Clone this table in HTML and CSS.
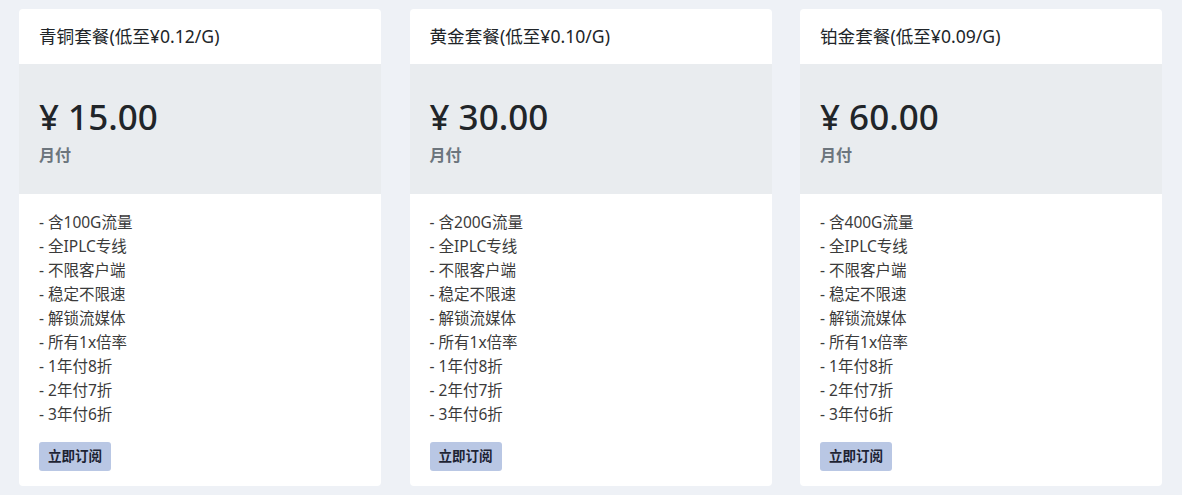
FILE: index.html
```html
<!DOCTYPE html>
<html lang="zh-CN">
<head>
<meta charset="utf-8">
<title>套餐</title>
<link rel="stylesheet" href="styles.css">
</head>
<body>
<div class="plans">
  <div class="card">
    <div class="card-header">青铜套餐(低至¥0.12/G)</div>
    <div class="card-price">
      <div class="price">¥ 15.00</div>
      <div class="period">月付</div>
    </div>
    <div class="card-body">
      <ul class="features">
        <li>- 含100G流量</li>
        <li>- 全IPLC专线</li>
        <li>- 不限客户端</li>
        <li>- 稳定不限速</li>
        <li>- 解锁流媒体</li>
        <li>- 所有1x倍率</li>
        <li>- 1年付8折</li>
        <li>- 2年付7折</li>
        <li>- 3年付6折</li>
      </ul>
      <button class="btn">立即订阅</button>
    </div>
  </div>
  <div class="card">
    <div class="card-header">黄金套餐(低至¥0.10/G)</div>
    <div class="card-price">
      <div class="price">¥ 30.00</div>
      <div class="period">月付</div>
    </div>
    <div class="card-body">
      <ul class="features">
        <li>- 含200G流量</li>
        <li>- 全IPLC专线</li>
        <li>- 不限客户端</li>
        <li>- 稳定不限速</li>
        <li>- 解锁流媒体</li>
        <li>- 所有1x倍率</li>
        <li>- 1年付8折</li>
        <li>- 2年付7折</li>
        <li>- 3年付6折</li>
      </ul>
      <button class="btn">立即订阅</button>
    </div>
  </div>
  <div class="card">
    <div class="card-header">铂金套餐(低至¥0.09/G)</div>
    <div class="card-price">
      <div class="price">¥ 60.00</div>
      <div class="period">月付</div>
    </div>
    <div class="card-body">
      <ul class="features">
        <li>- 含400G流量</li>
        <li>- 全IPLC专线</li>
        <li>- 不限客户端</li>
        <li>- 稳定不限速</li>
        <li>- 解锁流媒体</li>
        <li>- 所有1x倍率</li>
        <li>- 1年付8折</li>
        <li>- 2年付7折</li>
        <li>- 3年付6折</li>
      </ul>
      <button class="btn">立即订阅</button>
    </div>
  </div>
</div>
</body>
</html>
```

FILE: styles.css
```css
html, body {
  margin: 0;
  padding: 0;
}
body {
  background: #eef1f6;
  font-family: "Noto Sans", "Noto Sans CJK SC", sans-serif;
  color: #212529;
}
.plans {
  display: grid;
  grid-template-columns: repeat(3, 362px);
  gap: 28.5px;
  padding: 9px 20px 8px 19px;
}
.card {
  background: #fff;
  border-radius: 4px;
  overflow: hidden;
  display: flex;
  flex-direction: column;
}
.card-header {
  padding: 14px 20px;
  font-size: 17.6px;
  line-height: 27px;
  color: #212529;
}
.card-price {
  background: #e9ecef;
  padding: 31px 20px 27px;
}
.price {
  font-size: 35px;
  line-height: 43px;
  font-weight: 500;
  color: #212529;
}
.period {
  margin-top: 5px;
  font-size: 16px;
  line-height: 24px;
  font-weight: 700;
  color: #6c757d;
}
.card-body {
  padding: 16px 20px 15px;
}
.features {
  list-style: none;
  margin: 0;
  padding: 0;
  font-size: 15.5px;
  line-height: 24px;
  color: #3b3b3b;
}
.btn {
  margin-top: 16px;
  display: block;
  border: 0;
  border-radius: 3px;
  background: #b9c7e4;
  color: #1d2333;
  font-family: "Noto Sans", "Noto Sans CJK SC", sans-serif;
  font-size: 13.5px;
  font-weight: 700;
  line-height: 19px;
  padding: 5px 9px;
  height: 29px;
}
```
